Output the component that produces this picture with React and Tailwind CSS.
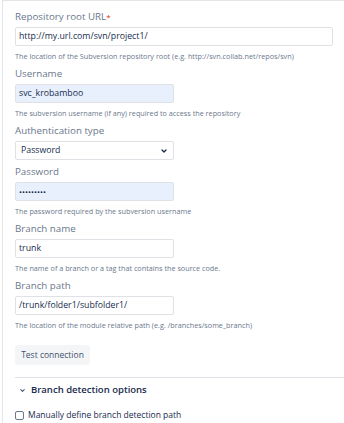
import { ChevronDown } from 'lucide-react';

const font = { fontFamily: '"Open Sans", "Noto Sans", sans-serif' };

const Field = ({ label, required, children, help, className = '' }) => (
    <div className={className}>
        <label className="block text-[9.75px] leading-[14px] text-[#6b778c]">
            {label}
            {required && <span className="text-[8px] text-[#de350b] align-top">*</span>}
        </label>
        <div className="mt-[3px]">{children}</div>
        {help && <p className="mt-[4px] whitespace-nowrap text-[7.25px] leading-[12px] text-[#6b778c]">{help}</p>}
    </div>
);

const Input = ({ value, wide, filled }) => (
    <div
        className={`flex h-[19px] items-center rounded-[2px] border border-[#dfe1e6] px-[3px] text-[8.75px] text-[#172b4d] ${
            wide ? 'w-[318px]' : 'w-[159px]'
        } ${filled ? 'bg-[#e8f0fe]' : 'bg-white'}`}
    >
        {value}
    </div>
);

export default function App() {
    return (
        <div className="h-[423px] w-[344px] overflow-hidden bg-white" style={font}>
            <div className="ml-[2px] h-full border-l border-t border-[#e4e5e8] pl-[12px] pt-[9px]">
                <Field label="Repository root URL" required help="The location of the Subversion repository root (e.g. http://svn.collab.net/repos/svn)">
                    <Input value="http://my.url.com/svn/project1/" wide />
                </Field>

                <Field className="mt-[5px]" label="Username" help="The subversion username (if any) required to access the repository">
                    <Input value="svc_krobamboo" filled />
                </Field>

                <Field className="mt-[5px]" label="Authentication type">
                    <div className="flex h-[19px] w-[159px] items-center justify-between rounded-[2px] border border-[#dfe1e6] bg-white pl-[5px] pr-[5px] text-[8.75px] text-[#172b4d]">
                        Password
                        <ChevronDown className="h-[8px] w-[8px] text-[#172b4d]" strokeWidth={4} />
                    </div>
                </Field>

                <Field className="mt-[5px]" label="Password" help="The password required by the subversion username">
                    <div className="flex h-[19px] w-[159px] items-center rounded-[2px] border border-[#dfe1e6] bg-[#e8f0fe] px-[3px] text-[8px] text-[#172b4d]">
                        •••••••••
                    </div>
                </Field>

                <Field className="mt-[5px]" label="Branch name" help="The name of a branch or a tag that contains the source code.">
                    <Input value="trunk" />
                </Field>

                <Field className="mt-[5px]" label="Branch path" help="The location of the module relative path (e.g. /branches/some_branch)">
                    <Input value="/trunk/folder1/subfolder1/" />
                </Field>

                <button className="mt-[14px] flex h-[20px] w-[75px] items-center justify-center rounded-[3px] bg-[#f4f5f7] text-[8.5px] text-[#42526e]">
                    Test connection
                </button>

                <div className="mt-[12px] border-t border-[#dfe1e6] pt-[4px]">
                    <div className="flex h-[16px] items-center gap-[5px] pl-[4px]">
                        <ChevronDown className="h-[7px] w-[7px] text-[#42526e]" strokeWidth={3.5} />
                        <span className="text-[9.5px] font-semibold leading-[16px] text-[#172b4d]">Branch detection options</span>
                    </div>
                    <label className="mt-[11px] flex h-[12px] items-center gap-[4px]">
                        <span className="h-[9px] w-[9px] rounded-[2px] border border-[#6b778c] bg-white" />
                        <span className="text-[8.5px] leading-[12px] text-[#172b4d]">Manually define branch detection path</span>
                    </label>
                </div>
            </div>
        </div>
    );
}
